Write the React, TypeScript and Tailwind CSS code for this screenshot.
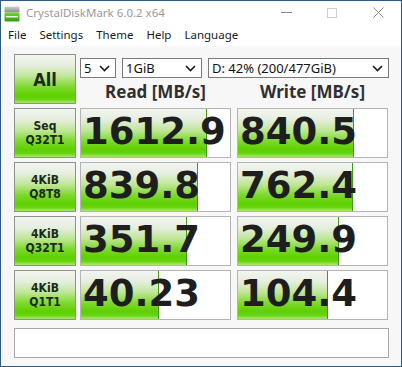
import React from "react";

const barGrad =
  "bg-[linear-gradient(to_bottom,#f3f5f1_0%,#e6eedf_22%,#bfe696_45%,#82da34_65%,#5ed000_84%,#66d40c_92%,#a6ea70_100%)]";

function Chevron() {
  return (
    <svg width="11" height="7" viewBox="0 0 11 7" className="shrink-0">
      <path d="M1 1 L5.5 5.5 L10 1" fill="none" stroke="#1a1a1a" strokeWidth="1.6" />
    </svg>
  );
}

function Select({ w, text }: { w: string; text: string }) {
  return (
    <div
      className={`${w} h-[20px] bg-white border border-[#7a7a7a] flex items-center justify-between pl-[3px] pr-[5px] text-[13px] text-[#111] leading-none`}
    >
      <span className="font-['Noto_Sans',sans-serif]">{text}</span>
      <Chevron />
    </div>
  );
}

function Label({ a, b }: { a: string; b: string }) {
  return (
    <div
      className={`w-[62px] h-[50px] border border-[#8a958a] ${barGrad} flex flex-col items-center justify-center text-[12px] leading-[14px] font-bold text-[#1c2a1c] font-['DejaVu_Sans_Condensed','Noto_Sans',sans-serif]`}
    >
      <span>{a}</span>
      <span>{b}</span>
    </div>
  );
}

function Value({ v, bar }: { v: string; bar: number }) {
  return (
    <div className="relative w-[151px] h-[50px] border border-[#b4b4b4] bg-white overflow-hidden">
      <div
        className={`absolute left-0 top-0 bottom-0 ${barGrad} border-r border-[#3f9a10]`}
        style={{ width: bar }}
      />
      <div className="relative h-full flex items-center pl-[2px] pb-[3px] text-[37px] leading-none font-bold text-[#1e1e1e] font-['DejaVu_Sans',sans-serif]">
        {v}
      </div>
    </div>
  );
}

const rows = [
  { a: "Seq", b: "Q32T1", r: "1612.9", rb: 126, w: "840.5", wb: 116 },
  { a: "4KiB", b: "Q8T8", r: "839.8", rb: 117, w: "762.4", wb: 115 },
  { a: "4KiB", b: "Q32T1", r: "351.7", rb: 106, w: "249.9", wb: 101 },
  { a: "4KiB", b: "Q1T1", r: "40.23", rb: 78, w: "104.4", wb: 90 },
];

export default function App() {
  return (
    <div className="w-[402px] h-[367px] border border-[#2b5b84] bg-[#f7f7f7] flex flex-col font-['Noto_Sans',sans-serif]">
      {/* Title bar */}
      <div className="h-[23px] bg-white flex items-center">
        <svg width="16" height="16" viewBox="0 0 16 16" className="ml-[3px] mt-[2px]">
          <defs>
            <linearGradient id="gtop" x1="0" y1="0" x2="0" y2="1">
              <stop offset="0" stopColor="#d0d0d0" />
              <stop offset="1" stopColor="#8a8a8a" />
            </linearGradient>
            <linearGradient id="gbot" x1="0" y1="0" x2="0" y2="1">
              <stop offset="0" stopColor="#7ad63a" />
              <stop offset="1" stopColor="#2f9a10" />
            </linearGradient>
          </defs>
          <rect x="0.5" y="0.5" width="15" height="6" rx="1" fill="url(#gtop)" />
          <rect x="0.5" y="6.5" width="15" height="9" rx="1" fill="url(#gbot)" />
          <rect x="2" y="10" width="12" height="1.5" fill="#e8f8e0" />
        </svg>
        <span className="ml-[6px] text-[11.5px] text-[#9a9a9a]">CrystalDiskMark 6.0.2 x64</span>
        <div className="ml-auto flex items-center h-full">
          <div className="w-[46px] h-full flex items-center justify-center">
            <div className="w-[11px] h-px bg-[#8a8a8a]" />
          </div>
          <div className="w-[46px] h-full flex items-center justify-center">
            <div className="w-[10px] h-[10px] border border-[#cfcfcf]" />
          </div>
          <div className="w-[46px] h-full flex items-center justify-center">
            <svg width="11" height="11" viewBox="0 0 11 11">
              <path d="M0.5 0.5 L10.5 10.5 M10.5 0.5 L0.5 10.5" stroke="#8a8a8a" strokeWidth="1" />
            </svg>
          </div>
        </div>
      </div>
      {/* Menu bar */}
      <div className="h-[22px] bg-white flex items-center pl-[7px] gap-[13px] text-[11.5px] text-[#1a1a1a]">
        <span>File</span>
        <span>Settings</span>
        <span>Theme</span>
        <span>Help</span>
        <span>Language</span>
      </div>
      {/* Client */}
      <div className="flex-1 pl-[13px] pt-[8px] flex flex-col">
        <div className="flex">
          <div
            className={`w-[62px] h-[50px] border border-[#8a958a] ${barGrad} flex items-center justify-center text-[18px] font-bold text-[#1c2a1c] font-['DejaVu_Sans_Condensed','Noto_Sans',sans-serif]`}
          >
            All
          </div>
          <div className="ml-[4px] flex flex-col">
            <div className="flex gap-[6px] mt-[4px]">
              <Select w="w-[36px]" text="5" />
              <Select w="w-[80px]" text="1GiB" />
              <Select w="w-[181px]" text="D: 42% (200/477GiB)" />
            </div>
            <div className="flex flex-1">
              <div className="w-[151px] flex items-center justify-center text-[17px] font-bold text-[#303030] leading-none pt-[1px]">
                Read [MB/s]
              </div>
              <div className="w-[151px] ml-[6px] flex items-center justify-center text-[17px] font-bold text-[#303030] leading-none pt-[1px]">
                Write [MB/s]
              </div>
            </div>
          </div>
        </div>
        {rows.map((r, i) => (
          <div key={i} className="flex mt-[4px]">
            <Label a={r.a} b={r.b} />
            <div className="ml-[4px]">
              <Value v={r.r} bar={r.rb} />
            </div>
            <div className="ml-[6px]">
              <Value v={r.w} bar={r.wb} />
            </div>
          </div>
        ))}
        <div className="mt-[8px] w-[375px] h-[30px] bg-white border border-[#a8a8a8]" />
      </div>
    </div>
  );
}
